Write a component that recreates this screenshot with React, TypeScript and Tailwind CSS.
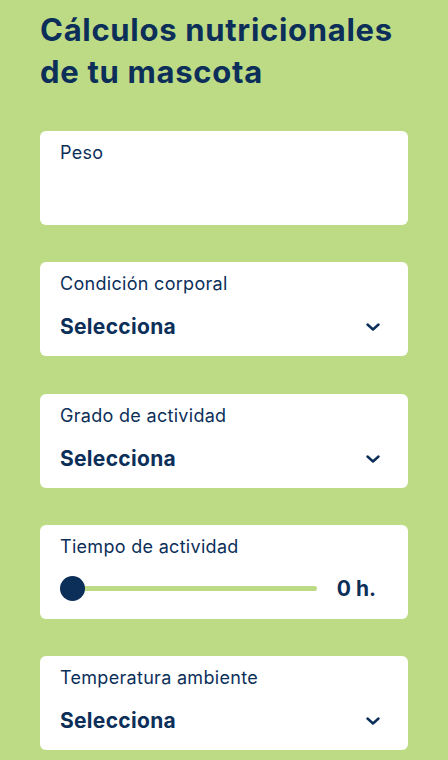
import React from "react";

const font = { fontFamily: "Inter, 'Noto Sans', sans-serif" };

function Chevron() {
  return (
    <svg width="14" height="8" viewBox="0 0 14 8" fill="none" className="shrink-0">
      <path d="M1.5 1.5 L7 6.5 L12.5 1.5" stroke="#0c2f5a" strokeWidth="2.4" strokeLinecap="round" strokeLinejoin="round" />
    </svg>
  );
}

function SelectCard({ label }: { label: string }) {
  return (
    <div className="bg-white rounded-md h-[94px] pl-5 pr-[28px] pt-[10px] flex flex-col">
      <div className="text-[18px] leading-[24px] tracking-[0.3px] text-[#0c2f5a]">{label}</div>
      <div className="mt-[18px] flex items-center justify-between">
        <span className="text-[21px] leading-[26px] font-bold tracking-[0.3px] text-[#0c2f5a]">Selecciona</span>
        <Chevron />
      </div>
    </div>
  );
}

export default function App() {
  return (
    <div className="min-h-screen bg-[#bddb84] px-10 pt-[9px] pb-10" style={font}>
      <h1 className="text-[31px] leading-[42px] font-bold text-[#0c2f5a] tracking-[0.7px]">
        Cálculos nutricionales
        <br />
        de tu mascota
      </h1>
      <div className="mt-[38px] flex flex-col gap-[37.25px]">
        <div className="bg-white rounded-md h-[94px] px-5 pt-[10px]">
          <div className="text-[18px] leading-[24px] tracking-[0.3px] text-[#0c2f5a]">Peso</div>
        </div>
        <SelectCard label="Condición corporal" />
        <SelectCard label="Grado de actividad" />
        <div className="bg-white rounded-md h-[94px] pl-5 pr-[32px] pt-[10px] flex flex-col">
          <div className="text-[18px] leading-[24px] tracking-[0.3px] text-[#0c2f5a]">Tiempo de actividad</div>
          <div className="mt-[17px] flex items-center gap-5">
            <div className="relative flex-1 h-[25px] flex items-center">
              <div className="absolute left-[12px] right-0 h-[5px] rounded-full bg-[#bddb84]" />
              <div className="relative w-[25px] h-[25px] rounded-full bg-[#0c2f5a]" />
            </div>
            <span className="text-[21px] leading-[26px] font-bold text-[#0c2f5a]">0 h.</span>
          </div>
        </div>
        <SelectCard label="Temperatura ambiente" />
      </div>
    </div>
  );
}
